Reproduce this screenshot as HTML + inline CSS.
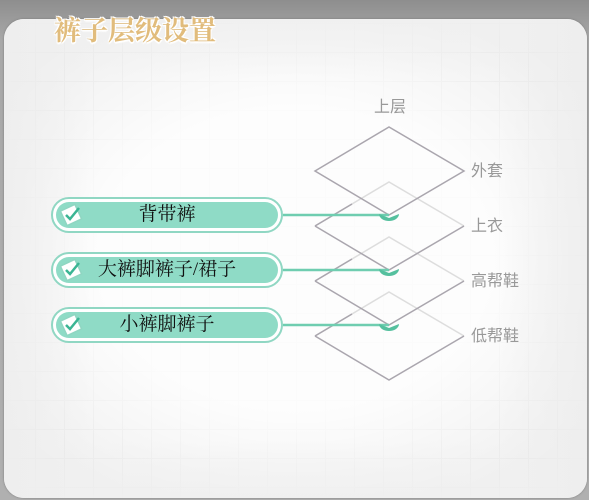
<!DOCTYPE html>
<html><head><meta charset="utf-8"><style>
html,body{margin:0;padding:0;}
body{width:589px;height:500px;position:relative;overflow:hidden;background:linear-gradient(#8e8e8e,#a8a8a8 40px,#b0b0b0);font-family:"Liberation Sans","Noto Sans CJK SC",sans-serif;}
.panel{position:absolute;left:4px;top:19px;width:583px;height:479px;border-radius:20px;background:#f0f0f0;overflow:hidden;box-shadow:0 0 2px #777;}
.grid{position:absolute;inset:0;background-image:linear-gradient(#e6e6e6 1px,transparent 1px),linear-gradient(90deg,#e6e6e6 1px,transparent 1px);background-size:29px 29px;background-position:2px 4px;}
.glow{position:absolute;inset:0;background:radial-gradient(ellipse 62% 58% at 50% 50%,rgba(255,255,255,0.85) 55%,rgba(255,255,255,0) 100%);}
.edge{position:absolute;inset:0;background:linear-gradient(90deg,rgba(238,238,238,.9),rgba(238,238,238,0) 15%,rgba(238,238,238,0) 85%,rgba(238,238,238,.9)),linear-gradient(rgba(240,240,240,.9),rgba(240,240,240,0) 12%,rgba(240,240,240,0) 88%,rgba(240,240,240,.9));}
.title{position:absolute;left:54px;top:9px;font:bold 27px "Liberation Serif","Noto Serif CJK SC",serif;color:#e1bc7c;letter-spacing:0px;text-shadow:1px 1px 0 #fff,-1px -1px 0 #fff,1px -1px 0 #fff,-1px 1px 0 #fff,0 2px 1px #fff;}
.pill{position:absolute;left:51px;width:228px;height:32px;border:2px solid #90d7c3;border-radius:18px;background:#fff;}
.pill .in{position:absolute;left:3px;top:3px;right:3px;bottom:3px;border-radius:14px;background:#8fdbc6;text-align:center;font:19px "Liberation Serif","Noto Serif CJK SC",serif;color:#111;line-height:26px;}
.lbl{position:absolute;font-size:16px;color:#999;}
</style></head><body>
<div class="panel"><div class="grid"></div><div class="glow"></div><div class="edge"></div></div>
<div class="title">裤子层级设置</div>
<svg width="589" height="500" style="position:absolute;left:0;top:0">
<g fill="none" stroke-width="1.5">
<path d="M315 336 L389 292 L464 336" stroke="#ddd"/>
<path d="M315 336 L389 380 L464 336" stroke="#aaa6ae"/>
<path d="M315 281 L389 237 L464 281" stroke="#ddd"/>
<path d="M315 281 L389 325 L464 281" stroke="#aaa6ae"/>
<path d="M315 226 L389 182 L464 226" stroke="#ddd"/>
<path d="M315 226 L389 270 L464 226" stroke="#aaa6ae"/>
<path d="M315 171 L389 127 L464 171 L389 215 Z" stroke="#aaa6ae"/>
<path d="M315 226 L352 204 M315 281 L352 259 M315 336 L352 314" stroke="#aaa6ae"/>
</g>
<g stroke="#6fcdb0" stroke-width="2.5">
<line x1="283" y1="215" x2="389" y2="215"/><line x1="283" y1="270" x2="389" y2="270"/><line x1="283" y1="325" x2="389" y2="325"/>
</g>
<g fill="#55c09e">
<path d="M379 214 a10 7 0 0 0 20 0 l-10 4z"/>
<path d="M379 269 a10 7 0 0 0 20 0 l-10 4z"/>
<path d="M379 324 a10 7 0 0 0 20 0 l-10 4z"/>
</g>
</svg>
<div class="pill" style="top:197px"><div class="in">背带裤</div></div>
<div class="pill" style="top:252px"><div class="in">大裤脚裤子/裙子</div></div>
<div class="pill" style="top:307px"><div class="in">小裤脚裤子</div></div>
<svg width="589" height="500" style="position:absolute;left:0;top:0;pointer-events:none">
<g transform="translate(71,215)"><rect x="-8" y="-8" width="16" height="16" fill="#fff" stroke="#8fd6c2" stroke-width="1.5" transform="rotate(-25)"/><path d="M-5 0 L-1 4 L8 -7" stroke="#3bb594" stroke-width="2.5" fill="none"/></g>
<g transform="translate(71,270)"><rect x="-8" y="-8" width="16" height="16" fill="#fff" stroke="#8fd6c2" stroke-width="1.5" transform="rotate(-25)"/><path d="M-5 0 L-1 4 L8 -7" stroke="#3bb594" stroke-width="2.5" fill="none"/></g>
<g transform="translate(71,325)"><rect x="-8" y="-8" width="16" height="16" fill="#fff" stroke="#8fd6c2" stroke-width="1.5" transform="rotate(-25)"/><path d="M-5 0 L-1 4 L8 -7" stroke="#3bb594" stroke-width="2.5" fill="none"/></g>
</svg>
<div class="lbl" style="left:374px;top:93px">上层</div>
<div class="lbl" style="left:471px;top:157px">外套</div>
<div class="lbl" style="left:471px;top:212px">上衣</div>
<div class="lbl" style="left:471px;top:267px">高帮鞋</div>
<div class="lbl" style="left:471px;top:322px">低帮鞋</div>
</body></html>
